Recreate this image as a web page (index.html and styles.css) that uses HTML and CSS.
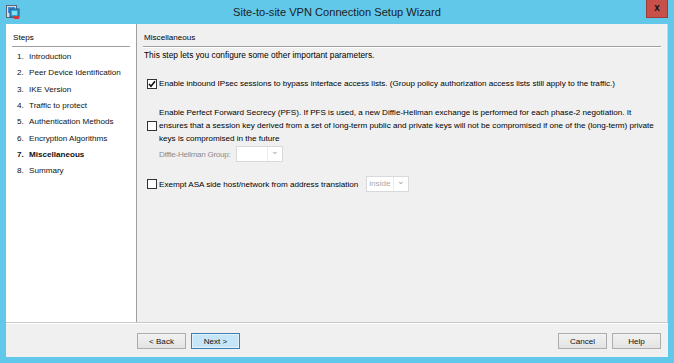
FILE: index.html
```html
<!DOCTYPE html>
<html lang="en">
<head>
  <meta charset="UTF-8">
  <title>Site-to-site VPN Connection Setup Wizard</title>
  <link rel="stylesheet" href="styles.css">
</head>
<body>
  <div class="window">
    <div class="titlebar">
      <div class="tb-left">
        <svg class="app-icon" width="14" height="15" viewBox="0 0 14 15">
          <rect x="0.5" y="0.5" width="10" height="12" fill="#d8dde6" stroke="#5a6678"/>
          <rect x="2" y="2" width="7" height="6" fill="#3d8fd8"/>
          <rect x="4" y="4" width="9" height="8" fill="#2fa3e0" stroke="#24577f"/>
          <rect x="6" y="6" width="5" height="4" fill="#7fe0f0"/>
          <rect x="8" y="11" width="5" height="3" fill="#d23a3a"/>
        </svg>
      </div>
      <div class="title">Site-to-site VPN Connection Setup Wizard</div>
      <div class="tb-right">
        <div class="close-btn">x</div>
      </div>
    </div>

    <div class="client">
      <div class="main">
        <div class="steps">
          <div class="section-head">Steps</div>
          <ol class="step-list">
            <li><span class="num">1.</span>Introduction</li>
            <li><span class="num">2.</span>Peer Device Identification</li>
            <li><span class="num">3.</span>IKE Version</li>
            <li><span class="num">4.</span>Traffic to protect</li>
            <li><span class="num">5.</span>Authentication Methods</li>
            <li><span class="num">6.</span>Encryption Algorithms</li>
            <li class="current"><span class="num">7.</span>Miscellaneous</li>
            <li><span class="num">8.</span>Summary</li>
          </ol>
        </div>

        <div class="page">
          <div class="section-head">Miscellaneous</div>
          <p class="intro">This step lets you configure some other important parameters.</p>

          <div class="opt opt-bypass">
            <span class="cb">
              <svg width="8" height="8" viewBox="0 0 8 8"><path d="M1 4 L3 6.3 L7 1.2" fill="none" stroke="#111" stroke-width="1.6"/></svg>
            </span>
            <span class="opt-text">Enable inbound IPsec sessions to bypass interface access lists. (Group policy authorization access lists still apply to the traffic.)</span>
          </div>

          <div class="opt opt-pfs">
            <span class="cb"></span>
            <span class="opt-text">Enable Perfect Forward Secrecy (PFS). If PFS is used, a new Diffie-Hellman exchange is performed for each phase-2 negotiation. It<br>ensures that a session key derived from a set of long-term public and private keys will not be compromised if one of the (long-term) private<br>keys is compromised in the future</span>
          </div>

          <div class="dh-row">
            <span class="disabled-label">Diffie-Hellman Group:</span>
            <span class="combo combo-dh"><span class="combo-val"></span><span class="combo-arrow">&#8964;</span></span>
          </div>

          <div class="opt opt-exempt">
            <span class="cb"></span>
            <span class="opt-text">Exempt ASA side host/network from address translation</span>
            <span class="combo combo-if"><span class="combo-val">inside</span><span class="combo-arrow">&#8964;</span></span>
          </div>
        </div>
      </div>

      <div class="footer">
        <div class="nav-btns">
          <button class="btn">&lt; Back</button>
          <button class="btn btn-default">Next &gt;</button>
        </div>
        <div class="side-btns">
          <button class="btn">Cancel</button>
          <button class="btn">Help</button>
        </div>
      </div>
    </div>
  </div>
</body>
</html>
```

FILE: styles.css
```css
* {
  box-sizing: border-box;
}

body {
  margin: 0;
  font-family: 'Liberation Sans', Arial, sans-serif;
  font-size: 8.1px;
  color: #000;
}

.window {
  width: 674px;
  height: 363px;
  background: #62c8ea;
  display: flex;
  flex-direction: column;
  padding: 0 6px 6px 6px;
}

/* title bar */
.titlebar {
  height: 24px;
  display: grid;
  grid-template-columns: 1fr auto 1fr;
  align-items: start;
}

.tb-left {
  padding-top: 5px;
}

.app-icon {
  display: block;
}

.title {
  font-size: 11.1px;
  color: #1c1c1c;
  line-height: 24px;
}

.tb-right {
  display: flex;
  justify-content: flex-end;
}

.close-btn {
  width: 22px;
  height: 18px;
  background: #c7514a;
  border: 1px solid #a03a35;
  border-top: none;
  color: #111;
  font-weight: bold;
  font-size: 10px;
  line-height: 15px;
  text-align: center;
}

/* client area */
.client {
  flex: 1;
  background: #f0f0f0;
  display: flex;
  flex-direction: column;
}

.main {
  height: 298px;
  display: flex;
}

.section-head {
  line-height: 13px;
  height: 16px;
  border-bottom: 1px solid #a0a0a0;
  box-shadow: 0 1px 0 #fff;
}

.steps {
  width: 131px;
  background: #fff;
  border-right: 1px solid #a0a0a0;
  padding: 7px 6px 0 6px;
}

.steps .section-head {
  padding-left: 1px;
  box-shadow: none;
}

.step-list {
  list-style: none;
  margin: 2px 0 0 0;
  padding: 0 0 0 5px;
}

.step-list li {
  line-height: 16.33px;
  color: #111;
}

.step-list .num {
  display: inline-block;
  width: 12px;
}

.step-list .current {
  font-weight: bold;
}

.page {
  flex: 1;
  padding: 7px 6px 0 6px;
  border-right: 1px solid #d0d0d0;
}

.page .section-head {
  padding-left: 1px;
}

.intro {
  margin: 2px 0 0 1px;
  line-height: 13px;
  font-size: 8.4px;
}

.opt {
  display: flex;
  align-items: center;
  padding-left: 4px;
}

.cb {
  width: 10px;
  height: 10px;
  flex: none;
  border: 1px solid #333;
  background: #fff;
  margin-right: 2px;
  display: flex;
  align-items: center;
  justify-content: center;
}

.opt-bypass {
  margin-top: 15px;
  line-height: 13px;
}

.opt-pfs {
  margin-top: 16px;
  line-height: 13px;
  white-space: nowrap;
}

.dh-row {
  display: flex;
  align-items: center;
  height: 16px;
  margin-top: 1px;
  padding-left: 16px;
}

.disabled-label {
  color: #8d8d8d;
  letter-spacing: -0.3px;
  margin-right: 6px;
}

.opt-exempt {
  margin-top: 14px;
  height: 16px;
}

.opt-exempt .opt-text {
  margin-right: 8px;
}

.combo {
  display: flex;
  height: 16px;
  border: 1px solid #d9d9d9;
  background: #fff;
}

.combo-dh {
  width: 47px;
}

.combo-if {
  width: 43px;
}

.combo-val {
  flex: 1;
  color: #a8a8a8;
  padding-left: 2px;
  line-height: 14px;
  border-right: 1px solid #ececec;
}

.combo-arrow {
  width: 14px;
  color: #a0a0a0;
  font-size: 9px;
  line-height: 8px;
  text-align: center;
}

/* footer */
.footer {
  flex: 1;
  border-top: 1px solid #c8c8c8;
  box-shadow: inset 0 1px 0 #fff;
  display: flex;
  justify-content: space-between;
  padding: 10px 7px 0 131px;
}

.nav-btns, .side-btns {
  display: flex;
  gap: 5px;
  align-items: flex-start;
}

.btn {
  width: 49px;
  height: 16px;
  padding: 0;
  font-family: 'Liberation Sans', Arial, sans-serif;
  font-size: 8.1px;
  color: #111;
  border: 1px solid #adadad;
  background: linear-gradient(#f2f2f2, #e3e3e3);
}

.btn-default {
  border: 1px solid #3c7fb1;
  background: #c5e6f8;
  box-shadow: inset 0 0 0 1px #e0f2fc;
}
```
